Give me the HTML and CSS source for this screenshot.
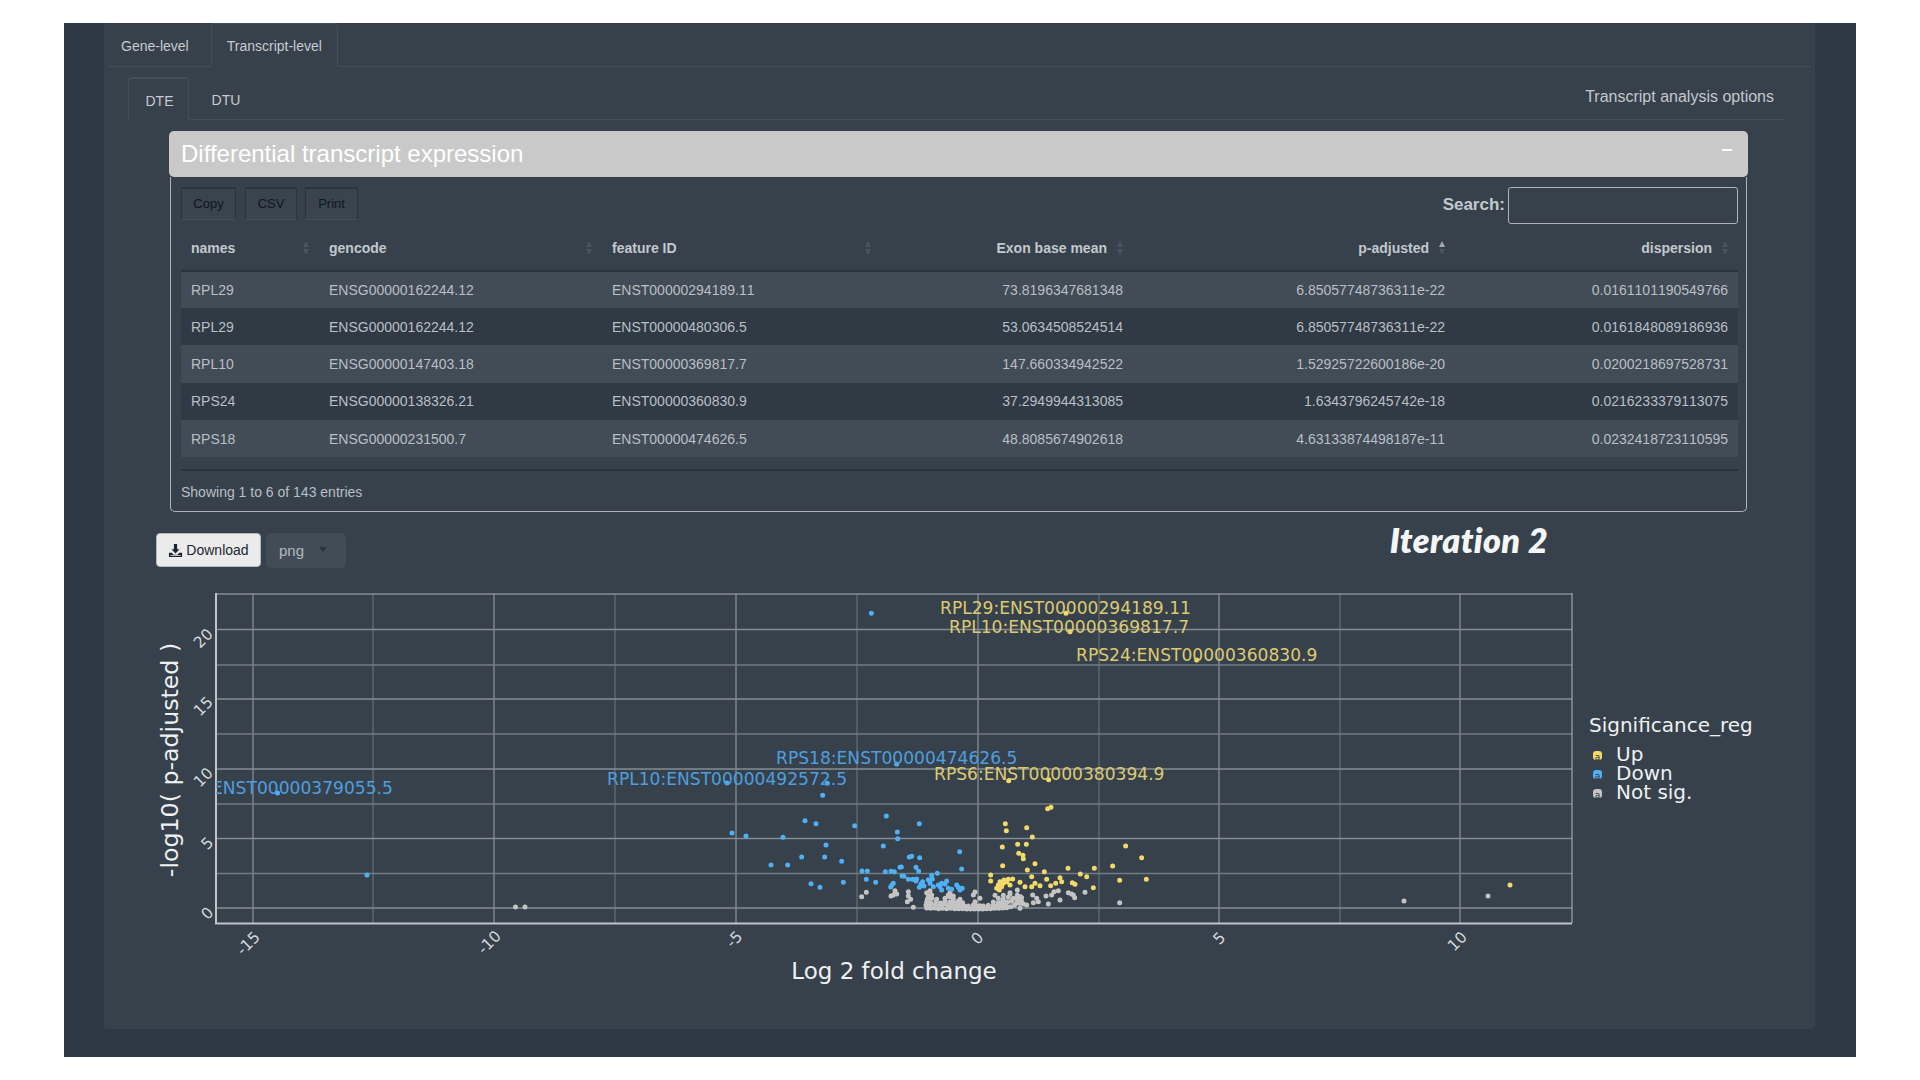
FILE: index.html
```html
<!DOCTYPE html>
<html lang="en">
<head>
<meta charset="utf-8">
<title>Transcript-level</title>
<link rel="stylesheet" href="styles.css">
</head>
<body>
<div class="frame">
  <main class="panel">
    <nav class="main-tabs">
      <a class="main-tab">Gene-level</a>
      <a class="main-tab is-active">Transcript-level</a>
    </nav>
    <nav class="sub-tabs">
      <a class="sub-tab is-active">DTE</a>
      <a class="sub-tab">DTU</a>
      <span class="sub-title">Transcript analysis options</span>
    </nav>
    <section class="box">
      <header class="box-head">
        <h3 class="box-title">Differential transcript expression</h3>
        <span class="box-collapse"></span>
      </header>
      <div class="box-body">
        <div class="toolbar">
          <div class="dt-buttons">
            <button class="dt-btn dt-copy">Copy</button>
            <button class="dt-btn dt-csv">CSV</button>
            <button class="dt-btn dt-print">Print</button>
          </div>
          <label class="search">Search:<span class="search-input"></span></label>
        </div>
        <table class="dt">
          <colgroup>
            <col class="c1"><col class="c2"><col class="c3"><col class="c4"><col class="c5"><col class="c6">
          </colgroup>
          <thead>
            <tr>
              <th>names<i class="sort"></i></th>
              <th>gencode<i class="sort"></i></th>
              <th>feature ID<i class="sort"></i></th>
              <th class="num">Exon base mean<i class="sort"></i></th>
              <th class="num">p-adjusted<i class="sort sort-asc"></i></th>
              <th class="num">dispersion<i class="sort"></i></th>
            </tr>
          </thead>
          <tbody>
            <tr><td>RPL29</td><td>ENSG00000162244.12</td><td>ENST00000294189.11</td><td class="num">73.8196347681348</td><td class="num">6.85057748736311e-22</td><td class="num">0.0161101190549766</td></tr>
            <tr><td>RPL29</td><td>ENSG00000162244.12</td><td>ENST00000480306.5</td><td class="num">53.0634508524514</td><td class="num">6.85057748736311e-22</td><td class="num">0.0161848089186936</td></tr>
            <tr><td>RPL10</td><td>ENSG00000147403.18</td><td>ENST00000369817.7</td><td class="num">147.660334942522</td><td class="num">1.52925722600186e-20</td><td class="num">0.0200218697528731</td></tr>
            <tr><td>RPS24</td><td>ENSG00000138326.21</td><td>ENST00000360830.9</td><td class="num">37.2949944313085</td><td class="num">1.6343796245742e-18</td><td class="num">0.0216233379113075</td></tr>
            <tr><td>RPS18</td><td>ENSG00000231500.7</td><td>ENST00000474626.5</td><td class="num">48.8085674902618</td><td class="num">4.63133874498187e-11</td><td class="num">0.0232418723110595</td></tr>
          </tbody>
        </table>
        <div class="dt-info">Showing 1 to 6 of 143 entries</div>
      </div>
    </section>
    <div class="actions">
      <button class="download">
        <svg class="dl-icon" viewBox="0 0 16 16"><path d="M6.300 1h3.400v5.600h2.600L8 11.200 3.700 6.600h2.600z"/><path d="M1 10.500h3l2 2h4l2-2h3V15H1z"/><path class="dl-hole" d="M2.600 13h10.800v.8H2.600z"/></svg>
        Download
      </button>
      <div class="format"><span>png</span><i class="caret"></i></div>
      <div class="iteration">Iteration 2</div>
    </div>
    <svg class="plot" viewBox="104 571 1711 459">
      <defs><clipPath id="plot-clip"><rect x="216" y="593" width="1356" height="330"/></clipPath></defs>
      <path class="grid-minor" d="M373 593V923M615 593V923M857 593V923M1099 593V923M1340 593V923"/>
      <path class="grid-major" d="M253 593V923M494 593V923M736 593V923M978 593V923M1219 593V923M1460 593V923"/>
      <path class="grid-hminor" d="M216 873.500H1572M216 804H1572M216 734H1572M216 665H1572"/>
      <path class="grid-hmajor" d="M216 908H1572M216 838.500H1572M216 769H1572M216 699H1572M216 629.500H1572M216 594H1572"/>
      <path class="plot-edge" d="M1572 593V923"/>
      <path class="plot-axis" d="M216 593V923.500H1572"/>

      <g transform="translate(780 580) scale(.33333)">
        <path class="dots dots-gray" d="M245 950h0M259 937h0M333 948h0M340 945h0M345 932h0M350 942h0M385 935h0M385 948h0M382 965h0M392 958h0M400 982h0M1019 968h0M805 972h0M840 960h0M884 953h0M875 942h0M865 938h0M915 937h0M822 935h0M835 932h0M815 945h0M798 948h0M775 965h0M760 968h0M758 945h0M720 985h0M740 975h0M770 955h0M880 945h0
        M440 984h0M452 985h0M464 984h0M476 986h0M488 985h0M500 986h0M512 985h0M524 986h0M536 986h0M548 986h0M560 987h0M572 987h0M584 987h0M596 987h0M608 987h0M620 986h0M632 986h0M644 985h0M656 985h0M668 984h0M680 983h0M692 980h0M704 976h0M718 970h0M730 972h0
        M438 975h0M450 977h0M465 974h0M478 978h0M490 972h0M503 976h0M516 974h0M528 976h0M540 975h0M552 977h0M565 978h0M580 975h0M590 978h0M600 977h0M610 978h0M625 976h0M640 975h0M652 977h0M665 974h0M678 976h0
        M440 966h0M452 968h0M468 965h0M482 969h0M495 964h0M510 966h0M522 968h0M535 963h0M548 968h0M585 965h0M640 966h0M655 968h0M668 964h0M682 967h0M695 964h0M710 968h0M725 965h0
        M442 958h0M455 955h0M470 958h0M495 955h0M508 950h0M520 956h0M540 958h0M655 955h0M670 958h0M685 952h0M700 955h0M712 958h0M725 953h0
        M445 948h0M455 945h0M505 945h0M520 948h0M580 945h0M585 936h0M600 955h0M645 946h0M670 946h0M690 942h0M712 945h0M722 950h0
        M440 938h0M450 932h0M510 938h0M690 938h0M712 930h0"/>
        <path class="dots dots-blue" d="M274 100h0M350 552h0M142 610h0M128 646h0M75 722h0M108 731h0M224 737h0M319 708h0M418 731h0M352 756h0M353 776h0M9 772h0M138 795h0M310 798h0M539 815h0M65 831h0M134 831h0M185 844h0M23 855h0M388 831h0M395 829h0M419 833h0M360 862h0M364 861h0M408 862h0M416 874h0M545 867h0M246 873h0M262 873h0M316 875h0M333 874h0M343 875h0M366 888h0M372 889h0M472 880h0M455 886h0M457 897h0M385 898h0M398 898h0M410 897h0M408 903h0M93 911h0M120 922h0M190 907h0M259 898h0M287 907h0M340 910h0M335 916h0M332 921h0M445 899h0M450 910h0M428 905h0M423 912h0M418 922h0M432 918h0M460 920h0M475 915h0M485 910h0M500 903h0M495 912h0M480 920h0M485 930h0M505 925h0M515 928h0M530 915h0M535 922h0M547 925h0M540 930h0"/>
        <path class="dots dots-yellow" d="M858 100h0M870 155h0M1250 240h0M686 602h0M806 599h0M803 686h0M813 682h0M676 731h0M679 752h0M740 743h0M757 771h0M713 793h0M739 793h0M667 801h0M716 820h0M729 826h0M730 836h0M1037 798h0M1085 833h0M765 851h0M668 857h0M742 870h0M793 875h0M864 865h0M943 865h0M998 858h0M901 882h0M920 890h0M632 885h0M632 903h0M755 890h0M800 898h0M840 893h0M845 905h0M1019 901h0M1099 898h0M720 907h0M735 920h0M755 920h0M765 910h0M780 917h0M812 917h0M827 910h0M877 908h0M885 913h0M940 923h0M660 905h0M672 900h0M685 898h0M698 897h0M655 915h0M650 925h0M665 920h0M658 930h0M690 915h0M670 910h0M680 905h0"/>
      </g>
      <path class="pts pts-blue" d="M277.500 793h0M367 875h0M727 783h0M732 833h0M746 836h0M771 865h0"/>
      <path class="pts pts-gray" d="M515.500 907h0M525 907h0M1404 901h0M1488 896h0"/>
      <path class="pts pts-yellow" d="M1510 885h0"/>

      <g class="lbl lbl-yellow">
        <text x="940" y="614">RPL29:ENST00000294189.11</text>
        <text x="949" y="633">RPL10:ENST00000369817.7</text>
        <text x="1076" y="661">RPS24:ENST00000360830.9</text>
        <text x="934" y="780">RPS6:ENST00000380394.9</text>
      </g>
      <g class="lbl lbl-blue">
        <text x="776" y="764">RPS18:ENST00000474626.5</text>
        <text x="607" y="785">RPL10:ENST00000492572.5</text>
        <text x="212" y="794" clip-path="url(#plot-clip)">ENST00000379055.5</text>
      </g>

      <g class="tick">
        <text transform="translate(207 642) rotate(-45)">20</text>
        <text transform="translate(207 710) rotate(-45)">15</text>
        <text transform="translate(207 781) rotate(-45)">10</text>
        <text transform="translate(211 847) rotate(-45)">5</text>
        <text transform="translate(211 917) rotate(-45)">0</text>
        <text transform="translate(252 947) rotate(-45)">-15</text>
        <text transform="translate(493 946) rotate(-45)">-10</text>
        <text transform="translate(738 943) rotate(-45)">-5</text>
        <text transform="translate(981 942) rotate(-45)">0</text>
        <text transform="translate(1223 942) rotate(-45)">5</text>
        <text transform="translate(1461 945) rotate(-45)">10</text>
      </g>
      <text class="axis-title axis-title-y" transform="translate(178 760) rotate(-90)">-log10( p-adjusted )</text>
      <text class="axis-title" x="894" y="979">Log 2 fold change</text>

      <text class="leg-title" x="1589" y="732">Significance_reg</text>
      <g class="leg-key leg-up"><rect x="1593" y="751" width="9" height="9" rx="3"/><text x="1597.500" y="760">a</text></g>
      <g class="leg-key leg-down"><rect x="1593" y="770" width="9" height="9" rx="3"/><text x="1597.500" y="779">a</text></g>
      <g class="leg-key leg-ns"><rect x="1593" y="789" width="9" height="9" rx="3"/><text x="1597.500" y="798">a</text></g>
      <text class="leg-item" x="1616" y="761">Up</text>
      <text class="leg-item" x="1616" y="780">Down</text>
      <text class="leg-item" x="1616" y="799">Not sig.</text>
    </svg>
  </main>
</div>
</body>
</html>
```
FILE: styles.css
```css
* { box-sizing: border-box; }
html, body { margin: 0; background: #fff; }
body { font-family: "Liberation Sans", Arial, sans-serif; color: #c3c8cc; }

.frame {
  margin: 23px 64px 0;
  height: 1034px;
  padding: 0 41px 28px 40px;
  background: #2d3944;
}
.panel {
  height: 100%;
  background: #36414c;
  border-radius: 0 0 4px 4px;
  display: flex;
  flex-direction: column;
}

.main-tabs {
  display: flex;
  height: 44px;
  margin: 0 4px;
  border-bottom: 1px solid #424e59;
  font-size: 14px;
}
.main-tab {
  height: 44px;
  padding: 14px 15px 0;
  margin-right: 6px;
  border: 1px solid transparent;
  color: #c6cbcf;
}
.main-tab:first-child { margin-left: -3px; }
.main-tab.is-active {
  background: #36414c;
  border-color: #424e59;
  border-bottom-color: #36414c;
  border-radius: 4px 4px 0 0;
}

.sub-tabs {
  display: flex;
  height: 53px;
  margin: 0 30px 11px 24px;
  border-bottom: 1px solid #424e59;
  font-size: 14px;
  padding-top: 10px;
}
.sub-tab {
  height: 43px;
  padding: 14px 0 0 2px;
  text-align: center;
  width: 61px;
  border: 1px solid transparent;
  color: #c6cbcf;
}
.sub-tab + .sub-tab { width: 64px; margin-left: 5px; padding-left: 0; }
.sub-tab.is-active {
  background: #36414c;
  border-color: #424e59;
  border-top: 2px solid #424e59;
  border-bottom-color: #36414c;
  border-radius: 4px 4px 0 0;
}
.sub-title {
  margin-left: auto;
  margin-right: 11px;
  font-size: 16px;
  color: #c3c8cc;
  padding-top: 11px;
  line-height: 18px;
}

.box {
  width: 1579px;
  height: 381px;
  margin-left: 65px;
  flex: none;
  display: flex;
  flex-direction: column;
}
.box-head {
  height: 46px;
  flex: none;
  background: #c9c9c9;
  border-radius: 5px;
  padding: 0 12px;
  display: flex;
  align-items: center;
  justify-content: space-between;
}
.box-title {
  margin: 0;
  font-size: 24px;
  font-weight: 400;
  color: #fff;
}
.box-collapse {
  width: 10px;
  height: 2px;
  margin: -9px 4px 0 0;
  background: #fff;
}
.box-body {
  flex: 1;
  padding: 10px 8px 0 10px;
  border: 1px solid #aeb3b7;
  border-top: 0;
  border-radius: 0 0 5px 5px;
  margin: 0 1px;
}

.toolbar {
  display: flex;
  justify-content: space-between;
  height: 36px;
}
.dt-buttons { display: flex; }
.dt-btn {
  height: 33px;
  padding: 0;
  font: 13px "Liberation Sans", Arial, sans-serif;
  color: #10171e;
  background: #39444e;
  border: 1px solid #2a343d;
  border-bottom-color: #454f59;
  box-shadow: inset 0 1px 0 #2c363f;
}
.dt-copy { width: 55px; margin-right: 9px; }
.dt-csv { width: 52px; margin-right: 8px; }
.dt-print { width: 53px; }

.search {
  display: flex;
  align-items: center;
  gap: 3px;
  font-size: 17px;
  font-weight: 700;
  color: #c3c8cc;
}
.search-input {
  width: 230px;
  height: 37px;
  border: 1px solid #aeb3b7;
  border-radius: 3px;
}

.dt {
  width: 1557px;
  table-layout: fixed;
  border-collapse: collapse;
  font-size: 14px;
  font-kerning: none;
}
.c1 { width: 138px; }
.c2 { width: 283px; }
.c3 { width: 279px; }
.c4 { width: 252px; }
.c5 { width: 322px; }
.c6 { width: 283px; }
.dt th {
  position: relative;
  height: 47.5px;
  padding: 3px 26px 0 10px;
  text-align: left;
  font-weight: 700;
  font-size: 14px;
  color: #c3c8cc;
  border-bottom: 2px solid #2a333c;
}
.dt td {
  height: 37.4px;
  padding: 0 10px;
  color: #b9bfc4;
}
.dt tbody tr:nth-child(odd) { background: #414c56; }
.dt tbody tr:nth-child(even) { background: #2f3a44; }
.dt .num { text-align: right; }

.sort {
  position: absolute;
  right: 10px;
  top: 18px;
  width: 6px;
  height: 14px;
}
.sort::before, .sort::after {
  content: "";
  position: absolute;
  left: 0;
  border-left: 3px solid transparent;
  border-right: 3px solid transparent;
}
.sort::before { top: 0; border-bottom: 6px solid #4a5560; }
.sort::after { bottom: 0; border-top: 6px solid #4a5560; }
.sort-asc::before { border-bottom-color: #a4aaaf; }

.dt-info {
  margin-top: 12px;
  padding-top: 13px;
  border-top: 2px solid #2a333c;
  font-size: 14px;
  line-height: 16px;
  color: #b9bfc4;
}

.actions {
  display: flex;
  align-items: stretch;
  height: 35px;
  margin: 21px 0 3px 52px;
  flex: none;
}
.download {
  width: 105px;
  height: 34px;
  padding: 0;
  display: flex;
  align-items: center;
  justify-content: center;
  gap: 3px;
  font: 14px "Liberation Sans", Arial, sans-serif;
  color: #1c2631;
  background: #ebebeb;
  border: 1px solid #b4b7ba;
  border-radius: 4px;
}
.dl-icon { width: 15px; height: 15px; fill: #1c2631; }
.dl-hole { fill: #ebebeb; }
.format {
  width: 80px;
  margin-left: 5px;
  background: #414c57;
  border-radius: 5px;
  font-size: 15px;
  color: #b3b9be;
  padding: 9px 0 0 13px;
  position: relative;
}
.caret {
  position: absolute;
  left: 53px;
  top: 14px;
  border-left: 4px solid transparent;
  border-right: 4px solid transparent;
  border-top: 5px solid #2b343c;
}
.iteration {
  margin: -11px 267px 0 auto;
  font-family: Lato, "Open Sans", sans-serif;
  font-weight: 800;
  font-style: italic;
  font-size: 34px;
  letter-spacing: .4px;
  line-height: 35px;
  color: #f4f6f8;
}

.plot { display: block; width: 1711px; height: 459px; flex: none; }
.plot text { font-family: "DejaVu Sans", sans-serif; }
.grid-minor { stroke: #6f7880; stroke-width: 1; fill: none; }
.grid-major { stroke: #8e959b; stroke-width: 1.2; fill: none; }
.grid-hminor { stroke: #737b83; stroke-width: 1.3; fill: none; }
.grid-hmajor { stroke: #858c92; stroke-width: 1.5; fill: none; }
.plot-edge { stroke: #a0a6ab; stroke-width: 1.2; fill: none; }
.plot-axis { stroke: #c0c4c8; stroke-width: 2; fill: none; }

.dots { fill: none; stroke-linecap: round; stroke-width: 15; }
.pts { fill: none; stroke-linecap: round; stroke-width: 5; }
.dots-gray, .pts-gray { stroke: #c4c4c4; }
.dots-blue, .pts-blue { stroke: #4fb0f5; }
.dots-yellow, .pts-yellow { stroke: #f2d968; }

.lbl text { font-size: 17.1px; }
.lbl-yellow { fill: #ddca70; }
.lbl-blue { fill: #4f9ede; }
.tick { fill: #d4d7da; }
.tick text { font-size: 15.5px; text-anchor: middle; }
.plot .axis-title { font-size: 23px; fill: #eef0f1; text-anchor: middle; }
.plot .axis-title-y { font-size: 23.7px; }
.leg-title { font-size: 20px; fill: #eef0f1; }
.leg-item { font-size: 20px; fill: #eef0f1; }
.leg-key text { font-size: 9px; fill: #28323c; text-anchor: middle; }
.leg-up rect { fill: #f2d968; }
.leg-down rect { fill: #4fb0f5; }
.leg-ns rect { fill: #c4c4c4; }
```
